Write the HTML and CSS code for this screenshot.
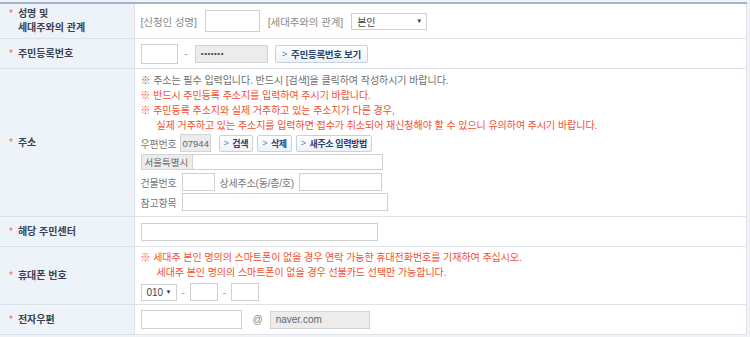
FILE: index.html
```html
<!DOCTYPE html>
<html lang="ko">
  <head>
    <meta charset="UTF-8" />
    <title>신청서 작성</title>
    <link rel="stylesheet" href="styles.css">
  </head>
  <body>
    <div class="page">
      <table class="form-table">
        <!-- 성명 / 관계 -->
        <tr class="row-name">
          <th><div class="label"><span class="req">*</span><span>성명 및<br>세대주와의 관계</span></div></th>
          <td>
            <div class="line wide">
              <span class="hint">[신청인 성명]</span>
              <span class="field w-name"></span>
              <span class="hint">[세대주와의 관계]</span>
              <span class="select w-rel"><span>본인</span><span class="arrow">▼</span></span>
            </div>
          </td>
        </tr>

        <!-- 주민등록번호 -->
        <tr class="row-short">
          <th><div class="label"><span class="req">*</span><span>주민등록번호</span></div></th>
          <td>
            <div class="line">
              <span class="field w-jumin1"></span>
              <span class="dash">-</span>
              <span class="field gray w-jumin2 dots">•••••••</span>
              <span class="btn btn-view">주민등록번호 보기</span>
            </div>
          </td>
        </tr>

        <!-- 주소 -->
        <tr class="row-addr">
          <th><div class="label"><span class="req">*</span><span class="thin">주소</span></div></th>
          <td>
            <div class="addr">
              <div class="notes">
                <p class="note">※ 주소는 필수 입력입니다. 반드시 [검색]을 클릭하여 작성하시기 바랍니다.</p>
                <p class="note red">※ 반드시 주민등록 주소지를 입력하여 주시기 바랍니다.</p>
                <p class="note red">※ 주민등록 주소지와 실제 거주하고 있는 주소지가 다른 경우,</p>
                <p class="note red indent">실제 거주하고 있는 주소지를 입력하면 접수가 취소되어 재신청해야 할 수 있으니 유의하여 주시기 바랍니다.</p>
              </div>
              <div class="line zip">
                <span class="hint dark">우편번호</span>
                <span class="field gray w-zip">07944</span>
                <span class="btn">검색</span>
                <span class="btn">삭제</span>
                <span class="btn">새주소 입력방법</span>
              </div>
              <div class="line">
                <span class="combo"><span class="field gray w-city">서울특별시</span><span class="field w-road"></span></span>
              </div>
              <div class="line">
                <span class="hint dark">건물번호</span>
                <span class="field w-bldg"></span>
                <span class="hint dark">상세주소(동/층/호)</span>
                <span class="field w-detail"></span>
              </div>
              <div class="line">
                <span class="hint dark">참고항목</span>
                <span class="field w-ref"></span>
              </div>
            </div>
          </td>
        </tr>

        <!-- 주민센터 -->
        <tr class="row-short">
          <th><div class="label"><span class="req">*</span><span>해당 주민센터</span></div></th>
          <td>
            <div class="line">
              <span class="field w-center"></span>
            </div>
          </td>
        </tr>

        <!-- 휴대폰 -->
        <tr class="row-phone">
          <th><div class="label"><span class="req">*</span><span>휴대폰 번호</span></div></th>
          <td>
            <div class="notes">
              <p class="note red">※ 세대주 본인 명의의 스마트폰이 없을 경우 연락 가능한 휴대전화번호를 기재하여 주십시오.</p>
              <p class="note red indent">세대주 본인 명의의 스마트폰이 없을 경우 선불카드 선택만 가능합니다.</p>
            </div>
            <div class="line phone">
              <span class="select w-tel"><span>010</span><span class="arrow">▼</span></span>
              <span class="dash">-</span>
              <span class="field w-tel2"></span>
              <span class="dash">-</span>
              <span class="field w-tel2"></span>
            </div>
          </td>
        </tr>

        <!-- 전자우편 -->
        <tr class="row-short">
          <th><div class="label"><span class="req">*</span><span>전자우편</span></div></th>
          <td>
            <div class="line">
              <span class="field w-mail"></span>
              <span class="at">@</span>
              <span class="field gray w-domain">naver.com</span>
            </div>
          </td>
        </tr>
      </table>
    </div>
  </body>
</html>
```

FILE: styles.css
```css
body {
  margin: 0;
  background-color: #f1f3f7;
  font-family: "Liberation Sans", "Noto Sans CJK KR", sans-serif;
  font-size: 10px;
  color: #666;
}

.page {
  padding-top: 2px;
  width: 748px;
}

.form-table {
  width: 747px;
  border-collapse: collapse;
  background-color: #fff;
  border-top: 2px solid #a3b2cf;
  border-right: 1px solid #dde2ea;
}

.form-table th {
  width: 134px;
  padding: 0 0 0 9px;
  background-color: #eef2f9;
  border-right: 1px solid #dbe1ea;
  border-bottom: 1px solid #dbe1ea;
  text-align: left;
  vertical-align: middle;
  font-weight: bold;
  color: #3a4150;
  line-height: 14px;
  box-sizing: border-box;
}

.form-table td {
  padding: 0 0 0 6px;
  border-bottom: 1px solid #dde2ea;
  vertical-align: middle;
}

.row-name td, .row-name th { height: 34px; }
.row-short td, .row-short th { height: 29px; }
.row-addr td, .row-addr th { height: 145px; }
.row-phone td, .row-phone th { height: 57px; }

.label {
  display: flex;
  align-items: flex-start;
  gap: 5px;
}

.req {
  color: #f0783c;
  font-weight: normal;
  font-size: 10px;
}

.line {
  display: flex;
  align-items: center;
  gap: 7px;
  height: 18px;
  white-space: nowrap;
}

.line.wide {
  gap: 8px;
}

.hint {
  color: #8a8a8a;
  font-size: 10.5px;
  letter-spacing: -0.1px;
}

.hint.dark {
  color: #777;
  font-size: 10px;
  letter-spacing: -0.2px;
}

.field {
  display: inline-flex;
  align-items: center;
  flex-shrink: 0;
  height: 18px;
  padding: 0 5px;
  box-sizing: border-box;
  background-color: #fff;
  border: 1px solid #cfcfcf;
  color: #666;
  white-space: nowrap;
}

.field.gray {
  background-color: #ececec;
  border-color: #d3d3d3;
}

.dots {
  font-size: 8px;
  color: #444;
  letter-spacing: 0.5px;
}

.dash {
  color: #999;
}

.at {
  color: #888;
  margin-left: 4px;
}

.select {
  display: inline-flex;
  align-items: center;
  justify-content: space-between;
  flex-shrink: 0;
  height: 17px;
  padding: 0 4px 0 5px;
  box-sizing: border-box;
  border: 1px solid #cfcfcf;
  background-color: #fff;
  color: #444;
}

.select .arrow {
  font-size: 6px;
  color: #333;
}

.btn {
  display: inline-flex;
  align-items: center;
  flex-shrink: 0;
  height: 17px;
  padding: 0 4px;
  box-sizing: border-box;
  border: 1px solid #c8d2de;
  border-radius: 2px;
  background: linear-gradient(#ffffff, #eef2f6);
  color: #274472;
  font-size: 9px;
  font-weight: bold;
  letter-spacing: -0.4px;
}

.btn::before {
  content: ">";
  color: #4a86c8;
  font-weight: normal;
  margin-right: 4px;
}

.btn-view {
  height: 18px;
  padding: 0 6px;
  font-size: 9.5px;
  letter-spacing: -0.3px;
}

.addr {
  display: flex;
  flex-direction: column;
  gap: 2px;
  padding: 4px 0 5px;
}

.addr .line {
  gap: 5px;
}

.addr .line.zip {
  height: 16px;
  gap: 4px;
}

.zip .hint {
  margin-right: -1px;
}

.zip .field + .btn {
  margin-left: 4px;
}

.note {
  margin: 0;
  line-height: 15px;
  color: #6e6e6e;
  font-size: 10px;
  letter-spacing: -0.05px;
  white-space: nowrap;
}

.note.red {
  color: #f0502f;
}

.note.indent {
  padding-left: 16px;
}

.phone {
  margin-top: 3px;
  gap: 5px;
}

.combo {
  display: flex;
}

.combo .field + .field {
  border-left: none;
}

.w-name { width: 55px; height: 22px; }
.w-rel { width: 76px; }
.w-jumin1 { width: 37px; height: 20px; }
.w-jumin2 { width: 73px; }
.w-zip { width: 31px; padding: 0 2px; font-size: 9.5px; }
.w-city { width: 52px; height: 16px; padding: 0 3px; font-size: 9.5px; }
.w-road { width: 190px; height: 16px; }
.w-bldg { width: 33px; }
.w-detail { width: 83px; }
.w-ref { width: 206px; }
.w-center { width: 237px; }
.w-tel { width: 36px; }
.w-tel2 { width: 28px; }
.w-mail { width: 101px; height: 19px; }
.w-domain { width: 100px; }
```
